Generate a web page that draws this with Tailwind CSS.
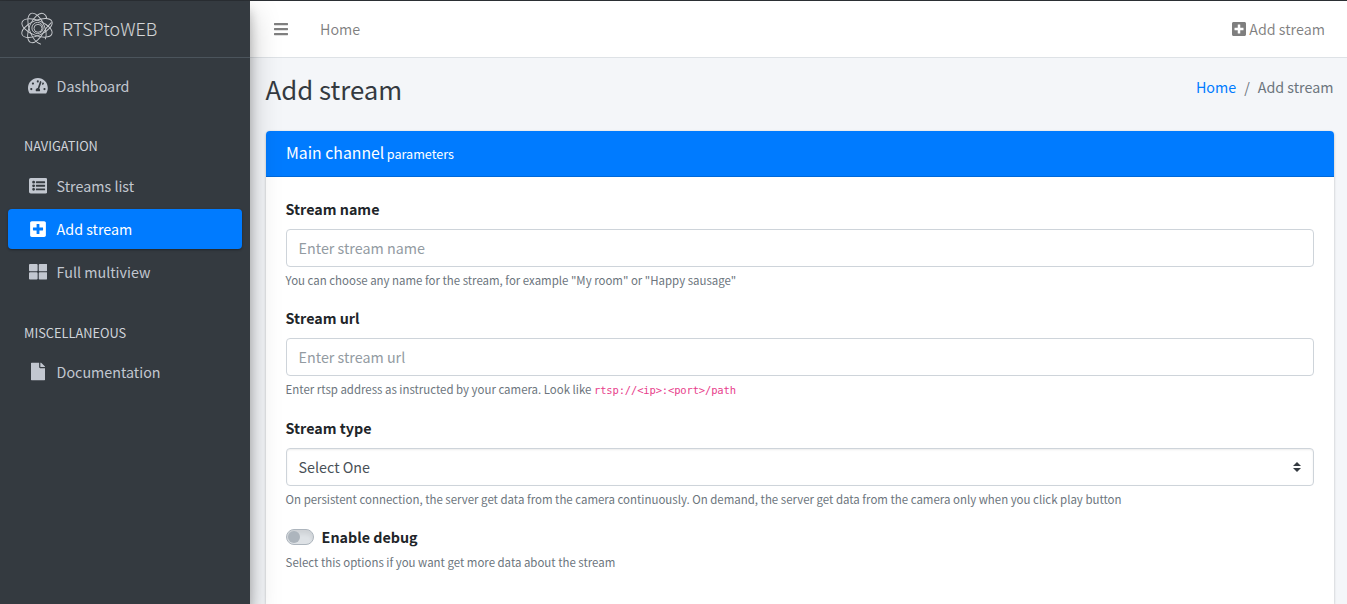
<!DOCTYPE html>
<html lang="en">
<head>
<meta charset="utf-8">
<title>RTSPtoWEB - Add stream</title>
<script src="https://cdn.jsdelivr.net/npm/@tailwindcss/browser@4"></script>
</head>
<body class="h-[604px] overflow-hidden bg-[#f4f6f9] font-['Noto_Sans_CJK_SC',sans-serif] text-[14.3px] leading-6 text-[#212529]">
<svg class="hidden">
  <symbol id="plus" viewBox="0 0 448 512"><path d="M400 32H48C21.5 32 0 53.5 0 80v352c0 26.5 21.5 48 48 48h352c26.5 0 48-21.5 48-48V80c0-26.5-21.5-48-48-48zm-32 252c0 6.600-5.400 12-12 12h-92v92c0 6.600-5.400 12-12 12h-56c-6.600 0-12-5.400-12-12v-92H92c-6.600 0-12-5.400-12-12v-56c0-6.600 5.400-12 12-12h92v-92c0-6.600 5.400-12 12-12h56c6.600 0 12 5.400 12 12v92h92c6.600 0 12 5.400 12 12v56z"/></symbol>
</svg>
<div class="flex h-full border-t border-[#2b2f34]">
  <aside class="relative z-10 flex w-[250px] shrink-0 flex-col bg-[#343a40] text-[#c2c7d0] shadow-[0_14px_28px_rgba(0,0,0,0.25),0_10px_10px_rgba(0,0,0,0.22)]">
    <a class="flex h-[57px] items-center border-b border-[#4b545c] pb-[2px] pl-[20px]">
      <svg class="h-[34px] w-[34px]" viewBox="-17 -17 34 34" fill="none" stroke="#c9ccd0" stroke-width=".9">
        <circle r="5.600" cx=".5"/><circle r="4" cx="1" cy=".3"/>
        <ellipse rx="16" ry="7.500" transform="rotate(22)"/>
        <ellipse rx="16.300" ry="7.500" transform="rotate(-24)"/>
        <path transform="rotate(68)" d="M16.500 2.500C14 6 7 8 0 7.800C-8 7.600-15.500 4.500-15.800 0C-15.500-4.500-8-7.600 0-7.600C6-7.600 11-6 13.500-3.500"/>
        <path transform="rotate(-66)" d="M11 11C7 9.500 4 8 0 7.800C-8 7.400-15.500 4.500-15.800 0C-15.500-4.500-8-7.600 0-7.600C8-7.600 15.500-4.500 15.800 0C15.800 2.500 14.500 4 12.500 5"/>
      </svg>
      <span class="ml-2 text-[17.9px] font-light text-white/80">RTSPtoWEB</span>
    </a>
    <nav class="flex flex-col px-2 pt-2">
      <a class="flex h-10 items-center pl-4">
        <span class="flex w-7 justify-center"><svg class="h-[17.6px] w-[19.8px]" fill="currentColor" viewBox="0 0 576 512"><path d="M288 32C128.940 32 0 160.940 0 320c0 52.800 14.250 102.260 39.060 144.800 5.610 9.620 16.300 15.200 27.440 15.200h443c11.140 0 21.830-5.580 27.440-15.200C561.750 422.260 576 372.800 576 320c0-159.060-128.940-288-288-288zm0 64c14.710 0 26.580 10.130 30.320 23.650-1.110 2.260-2.640 4.230-3.450 6.670l-9.220 27.670c-5.130 3.490-10.970 6.010-17.640 6.010-17.670 0-32-14.330-32-32S270.330 96 288 96zM96 384c-17.670 0-32-14.330-32-32s14.330-32 32-32 32 14.330 32 32-14.330 32-32 32zm48-160c-17.670 0-32-14.330-32-32s14.330-32 32-32 32 14.330 32 32-14.330 32-32 32zm246.770-72.410l-61.330 184C343.130 347.330 352 364.540 352 384c0 11.720-3.380 22.550-8.880 32H232.880c-5.500-9.450-8.880-20.280-8.880-32 0-33.940 26.500-61.430 59.900-63.590l61.340-184.010c4.170-12.560 17.730-19.450 30.360-15.170 12.570 4.190 19.350 17.790 15.170 30.360zm14.660 57.200l15.520-46.550c3.470-1.290 7.130-2.230 11.050-2.230 17.670 0 32 14.330 32 32s-14.330 32-32 32c-11.380-.010-20.890-6.280-26.570-15.220zM480 384c-17.670 0-32-14.330-32-32s14.330-32 32-32 32 14.330 32 32-14.330 32-32 32z"/></svg></span>
        <span class="ml-[4.600px] ml-[4.6px]">Dashboard</span>
      </a>
      <div class="mt-[28px] pl-4 text-[12.8px] leading-6 text-[#d0d4db]">NAVIGATION</div>
      <a class="mt-2 flex h-10 items-center pl-4">
        <span class="flex w-7 justify-center"><svg class="h-[17.6px] w-[18.4px]" preserveAspectRatio="none" fill="currentColor" viewBox="0 0 512 512"><path fill-rule="evenodd" d="M48 32h416a48 48 0 0 1 48 48v352a48 48 0 0 1-48 48H48a48 48 0 0 1-48-48V80a48 48 0 0 1 48-48zM128 112a40 40 0 1 0 0 80 40 40 0 0 0 0-80zm0 104a40 40 0 1 0 0 80 40 40 0 0 0 0-80zm0 104a40 40 0 1 0 0 80 40 40 0 0 0 0-80zM204 124a12 12 0 0 0-12 12v32a12 12 0 0 0 12 12h232a12 12 0 0 0 12-12v-32a12 12 0 0 0-12-12zm0 104a12 12 0 0 0-12 12v32a12 12 0 0 0 12 12h232a12 12 0 0 0 12-12v-32a12 12 0 0 0-12-12zm0 104a12 12 0 0 0-12 12v32a12 12 0 0 0 12 12h232a12 12 0 0 0 12-12v-32a12 12 0 0 0-12-12z"/></svg></span>
        <span class="ml-[4.6px]">Streams list</span>
      </a>
      <a class="mt-[3px] flex h-10 items-center rounded bg-[#007bff] pl-4 text-white shadow-[0_1px_3px_rgba(0,0,0,0.12),0_1px_2px_rgba(0,0,0,0.24)]">
        <span class="flex w-7 justify-center"><svg class="h-[18px] w-[16px]" fill="currentColor"><use href="#plus"/></svg></span>
        <span class="ml-[4.6px]">Add stream</span>
      </a>
      <a class="mt-[3px] flex h-10 items-center pl-4">
        <span class="flex w-7 justify-center"><svg class="h-[17.6px] w-[18.4px]" preserveAspectRatio="none" fill="currentColor" viewBox="0 0 512 512"><path d="M296 32h192c13.255 0 24 10.745 24 24v160c0 13.255-10.745 24-24 24H296c-13.255 0-24-10.745-24-24V56c0-13.255 10.745-24 24-24zm-80 0H24C10.745 32 0 42.745 0 56v160c0 13.255 10.745 24 24 24h192c13.255 0 24-10.745 24-24V56c0-13.255-10.745-24-24-24zM0 296v160c0 13.255 10.745 24 24 24h192c13.255 0 24-10.745 24-24V296c0-13.255-10.745-24-24-24H24c-13.255 0-24 10.745-24 24zm296 184h192c13.255 0 24-10.745 24-24V296c0-13.255-10.745-24-24-24H296c-13.255 0-24 10.745-24 24v160c0 13.255 10.745 24 24 24z"/></svg></span>
        <span class="ml-[4.6px]">Full multiview</span>
      </a>
      <div class="mt-[29px] pl-4 text-[12.8px] leading-6 text-[#d0d4db]">MISCELLANEOUS</div>
      <a class="mt-[7px] flex h-10 items-center pl-4">
        <span class="flex w-7 justify-center"><svg class="h-[18px] w-[14px] -translate-y-[0.5px]" preserveAspectRatio="none" fill="currentColor" viewBox="0 0 384 512"><path d="M224 136V0H24C10.700 0 0 10.700 0 24v464c0 13.300 10.700 24 24 24h336c13.300 0 24-10.700 24-24V160H248c-13.200 0-24-10.800-24-24zm160-14.100v6.100H256V0h6.100c6.400 0 12.500 2.500 17 7l97.900 98c4.500 4.500 7 10.600 7 16.900z"/></svg></span>
        <span class="ml-[4.6px]">Documentation</span>
      </a>
    </nav>
  </aside>

  <div class="flex min-w-0 flex-1 flex-col">
    <header class="flex h-[57px] shrink-0 items-center border-b border-[#dee2e6] bg-white pr-[22px] pl-6 text-black/50">
      <svg class="h-4 w-[14px]" fill="currentColor" viewBox="0 0 448 512"><path d="M16 132h416c8.837 0 16-7.163 16-16V76c0-8.837-7.163-16-16-16H16C7.163 60 0 67.163 0 76v40c0 8.837 7.163 16 16 16zm0 160h416c8.837 0 16-7.163 16-16v-40c0-8.837-7.163-16-16-16H16c-8.837 0-16 7.163-16 16v40c0 8.837 7.163 16 16 16zm0 160h416c8.837 0 16-7.163 16-16v-40c0-8.837-7.163-16-16-16H16c-8.837 0-16 7.163-16 16v40c0 8.837 7.163 16 16 16z"/></svg>
      <span class="ml-8">Home</span>
      <svg class="ml-auto h-4 w-[14px]" fill="currentColor"><use href="#plus"/></svg>
      <span class="ml-[3px]">Add stream</span>
    </header>
    <main class="flex min-h-0 flex-1 flex-col pr-[13px] pl-4">
      <div class="flex h-[73px] shrink-0 justify-between pt-[13px] pr-[0.5px]">
        <h1 class="-ml-[0.5px] text-[25.8px] leading-[35px] text-[#343a40]">Add stream</h1>
        <div class="flex gap-2 pt-1 text-[#6c757d]"><a class="text-[#007bff]">Home</a><span>/</span><span>Add stream</span></div>
      </div>
      <section class="min-h-0 flex-1 rounded-t bg-white shadow-[0_0_1px_rgba(0,0,0,0.125),0_1px_3px_rgba(0,0,0,0.2)]">
        <div class="flex h-[46px] items-baseline rounded-t border-b border-[#0069d9] bg-[#007bff] px-5 pt-[9px] text-white">
          <h3 class="text-[15.8px] leading-[26px]">Main channel <small class="-ml-[1px] text-[12.6px]">parameters</small></h3>
        </div>
        <form class="px-5 pt-5">
          <div class="mb-4">
            <label class="-ml-[0.4px] mb-2 block font-bold">Stream name</label>
            <div class="flex h-[38px] items-center rounded border border-[#ced4da] px-[11.6px] text-[#939ba2]">Enter stream name</div>
            <small class="-ml-[0.4px] mt-1 block text-[11.45px] leading-[19px] text-[#6c757d]">You can choose any name for the stream, for example "My room" or "Happy sausage"</small>
          </div>
          <div class="mb-4">
            <label class="-ml-[0.4px] mb-2 block font-bold">Stream url</label>
            <div class="flex h-[38px] items-center rounded border border-[#ced4da] px-[11.6px] text-[#939ba2]">Enter stream url</div>
            <small class="-ml-[0.4px] mt-1 block h-5 text-[11.45px] leading-[19px] text-[#6c757d]">Enter rtsp address as instructed by your camera. Look like <code class="font-['DejaVu_Sans_Mono',monospace] text-[10.5px] tracking-[-0.155px] text-[#e83e8c]">rtsp://&lt;ip&gt;:&lt;port&gt;/path</code></small>
          </div>
          <div class="mb-4">
            <label class="-ml-[0.4px] mb-2 block font-bold">Stream type</label>
            <div class="flex h-[38px] items-center justify-between rounded border border-[#ced4da] px-[11.6px] text-[#495057] shadow-[inset_0_1px_2px_rgba(0,0,0,0.075)]">Select One
              <svg class="h-[10px] w-2" viewBox="0 0 4 5" fill="#343a40"><path d="M2 0L0 2h4zm0 5L0 3h4z"/></svg>
            </div>
            <small class="-ml-[0.4px] mt-1 block text-[11.46px] leading-[19px] text-[#6c757d]">On persistent connection, the server get data from the camera continuously. On demand, the server get data from the camera only when you click play button</small>
          </div>
          <div>
            <div class="flex h-6 items-center gap-[7.6px]">
              <span class="flex h-4 w-7 items-center rounded-full border border-[#adb5bd] bg-[#dee2e6] pl-[1px] shadow-[inset_0_4px_4px_rgba(0,0,0,0.07)]"><span class="h-3 w-3 rounded-full bg-[#adb5bd]"></span></span>
              <label class="font-bold">Enable debug</label>
            </div>
            <small class="-ml-[0.4px] mt-1 block text-[11.45px] leading-[19px] text-[#6c757d]">Select this options if you want get more data about the stream</small>
          </div>
        </form>
      </section>
    </main>
  </div>
</div>
</body>
</html>
